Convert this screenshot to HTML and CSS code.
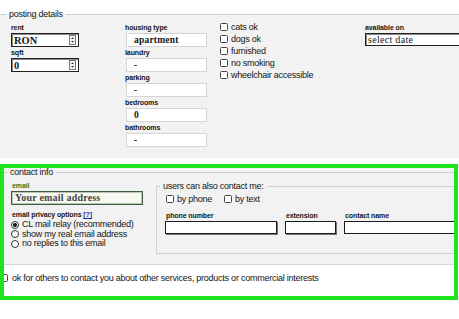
FILE: index.html
```html
<!DOCTYPE html>
<html lang="en">

<head>
  <meta charset="UTF-8">
  <meta name="viewport" content="width=device-width, initial-scale=1.0">
  <title>Posting Details</title>

  <link rel="stylesheet" href="styles.css">
</head>

<body>
  <form class="post-form" action="" method="GET">
    <fieldset class="details">
      <legend>posting details</legend>
      <div class="details-cols">
        <div class="col-price">
          <label class="field-label">rent</label>
          <div class="spin-box">
            <span>RON</span>
            <svg class="spin" width="7" height="10" viewBox="0 0 7 10"><rect x="0.5" y="0.5" width="6" height="9" fill="#f4f4f4" stroke="#777"/><path d="M2 4L3.5 2.5L5 4Z M2 6L3.5 7.5L5 6Z" fill="#222"/></svg>
          </div>
          <label class="field-label">sqft</label>
          <div class="spin-box">
            <span>0</span>
            <svg class="spin" width="7" height="10" viewBox="0 0 7 10"><rect x="0.5" y="0.5" width="6" height="9" fill="#f4f4f4" stroke="#777"/><path d="M2 4L3.5 2.5L5 4Z M2 6L3.5 7.5L5 6Z" fill="#222"/></svg>
          </div>
        </div>

        <div class="col-housing">
          <label class="field-label">housing type</label>
          <div class="text-box">apartment</div>
          <label class="field-label">laundry</label>
          <div class="text-box">-</div>
          <label class="field-label">parking</label>
          <div class="text-box">-</div>
          <label class="field-label">bedrooms</label>
          <div class="text-box">0</div>
          <label class="field-label">bathrooms</label>
          <div class="text-box">-</div>
        </div>

        <ul class="col-amenities">
          <li><input type="checkbox" class="box">cats ok</li>
          <li><input type="checkbox" class="box">dogs ok</li>
          <li><input type="checkbox" class="box">furnished</li>
          <li><input type="checkbox" class="box">no smoking</li>
          <li><input type="checkbox" class="box">wheelchair accessible</li>
        </ul>

        <div class="col-date">
          <label class="field-label">available on</label>
          <div class="date-box">select date</div>
        </div>
      </div>
    </fieldset>

    <div class="highlight">
      <div class="contact-wrap">
        <fieldset class="contact">
          <legend>contact info</legend>
          <div class="contact-cols">
            <div class="contact-left">
              <label class="field-label email-label">email</label>
              <div class="email-box">Your email address</div>
              <div class="field-label privacy-label">email privacy options <a href="#" class="help">[?]</a></div>
              <label class="radio-row"><input type="radio" name="privacy" class="dot" checked>CL mail relay (recommended)</label>
              <label class="radio-row"><input type="radio" name="privacy" class="dot">show my real email address</label>
              <label class="radio-row"><input type="radio" name="privacy" class="dot">no replies to this email</label>
            </div>

            <fieldset class="contact-by">
              <legend>users can also contact me:</legend>
              <div class="by-row">
                <label><input type="checkbox" class="box">by phone</label>
                <label><input type="checkbox" class="box">by text</label>
              </div>
              <div class="phone-row">
                <div class="phone-field phone-number">
                  <label class="field-label">phone number</label>
                  <input type="text" class="line-input">
                </div>
                <div class="phone-field phone-ext">
                  <label class="field-label">extension</label>
                  <input type="text" class="line-input">
                </div>
                <div class="phone-field phone-name">
                  <label class="field-label">contact name</label>
                  <input type="text" class="line-input">
                </div>
              </div>
            </fieldset>
          </div>
        </fieldset>
      </div>

      <label class="optin"><input type="checkbox" class="box">ok for others to contact you about other services, products or commercial interests</label>
    </div>
  </form>
</body>

</html>
```

FILE: styles.css
```css
* {
  box-sizing: border-box;
}

html,
body {
  margin: 0;
  overflow: hidden;
  background: #fff;
}

body {
  width: 459px;
  height: 319px;
  font-family: "Liberation Sans", Arial, sans-serif;
  font-size: 9px;
  letter-spacing: -0.25px;
  color: #151515;
}

fieldset {
  margin: 0;
  min-width: 0;
}

legend {
  padding: 0 3px;
  line-height: 10px;
}

input {
  margin: 0;
}

.field-label {
  display: block;
  font-size: 7px;
  font-weight: bold;
  letter-spacing: -0.1px;
  line-height: 11px;
}

/* posting details */
.details {
  margin-top: 9px;
  padding: 3px 0 11px 11px;
  border: 0;
  border-top: 1px solid #cdcdcd;
  background: #f2f2f2;
}

.details legend {
  margin-left: -5px;
}

.details-cols {
  display: flex;
}

.col-price {
  flex: none;
  width: 114px;
}

.spin-box {
  display: flex;
  align-items: center;
  justify-content: space-between;
  width: 68px;
  height: 14px;
  padding: 0 2px;
  background: #fff;
  border: 1px solid #222;
  box-shadow: inset 1px 1px 0 #888;
  font-family: "Liberation Serif", serif;
  font-size: 10.5px;
  font-weight: bold;
  letter-spacing: 0;
}

.col-housing {
  flex: none;
  width: 95px;
}

.text-box {
  width: 81px;
  height: 14px;
  margin-left: 1px;
  padding-left: 7px;
  background: #fff;
  border: 1px solid #d4d4d4;
  font-family: "Liberation Serif", serif;
  font-size: 9.5px;
  font-weight: bold;
  letter-spacing: 0.2px;
  line-height: 12px;
}

.col-amenities {
  flex: none;
  width: 145px;
  margin: -1px 0 0;
  padding: 0;
  list-style: none;
}

.col-amenities li {
  display: flex;
  align-items: center;
  line-height: 12px;
}

.box {
  appearance: none;
  flex: none;
  width: 8px;
  height: 8px;
  margin: 0 3px 0 0;
  background: #fff;
  border: 1px solid #444;
  border-radius: 1.5px;
}

.col-date {
  flex: 1;
  min-width: 0;
}

.date-box {
  height: 13px;
  padding-left: 2px;
  background: #fff;
  border: 1px solid #222;
  border-right: 0;
  box-shadow: inset 1px 1px 0 #888;
  font-family: "Liberation Serif", serif;
  font-size: 10px;
  letter-spacing: 0.3px;
  line-height: 11px;
}

/* contact info (highlighted) */
.highlight {
  position: relative;
  width: 458px;
  margin-top: 6px;
  overflow: hidden;
}

.highlight::after {
  content: "";
  position: absolute;
  inset: 0;
  border: 4px solid #1ee51e;
  pointer-events: none;
}

.contact-wrap {
  padding-top: 3px;
  background: #f2f2f2;
}

.contact {
  padding: 4px 0 10px 11px;
  border: 0;
  border-top: 1px solid #cdcdcd;
  border-bottom: 1px solid #d6d6d6;
  background: #f2f2f2;
}

.contact > legend {
  margin-left: -4px;
}

.contact-cols {
  display: flex;
  align-items: flex-start;
}

.contact-left {
  flex: none;
  width: 145px;
}

.email-label {
  margin-left: 1px;
  line-height: 10px;
  color: #2f7a2f;
}

.email-box {
  width: 132px;
  height: 14px;
  padding-left: 3px;
  background: #f7f8f2;
  border: 1px solid #3f5a3f;
  box-shadow: inset 0 0 0 1px #b9c6b2;
  font-family: "Liberation Serif", serif;
  font-size: 10px;
  font-weight: bold;
  letter-spacing: 0.2px;
  line-height: 12px;
  color: #444;
}

.privacy-label {
  margin: 5px 0 0 1px;
  line-height: 10px;
}

.help {
  color: #1b2bb0;
}

.radio-row {
  display: flex;
  align-items: center;
  line-height: 9.5px;
}

.dot {
  appearance: none;
  flex: none;
  width: 8px;
  height: 8px;
  margin: 0 3px 0 0;
  background: #fff;
  border: 1px solid #333;
  border-radius: 50%;
}

.dot:checked {
  background: radial-gradient(circle, #222 40%, #fff 55%);
}

.contact-by {
  flex: 1;
  min-width: 0;
  padding: 2px 0 19px 9px;
  border: 1px solid #d0d0d0;
  border-right: 0;
}

.contact-by legend {
  margin-left: -6px;
}

.by-row {
  display: flex;
  gap: 12px;
  line-height: 12px;
}

.by-row label {
  display: flex;
  align-items: center;
}

.phone-row {
  display: flex;
  gap: 8px;
  margin: 6px 0 0 -1px;
}

.phone-row .field-label {
  margin-left: 1px;
  line-height: 10px;
}

.phone-field {
  flex: none;
}

.line-input {
  display: block;
  width: 100%;
  height: 13px;
  padding: 0;
  background: #fff;
  border: 1px solid #1c1c1c;
  box-shadow: 1px 1px 0 #777;
}

.phone-number {
  width: 112px;
}

.phone-ext {
  width: 51px;
}

.phone-name {
  flex: 1;
  min-width: 0;
}

.phone-name .line-input {
  border-right: 0;
  box-shadow: none;
}

.optin {
  display: flex;
  align-items: center;
  padding: 8px 0 17px;
  line-height: 10px;
  background: #fff;
}

.optin .box {
  margin-right: 4px;
}
```
